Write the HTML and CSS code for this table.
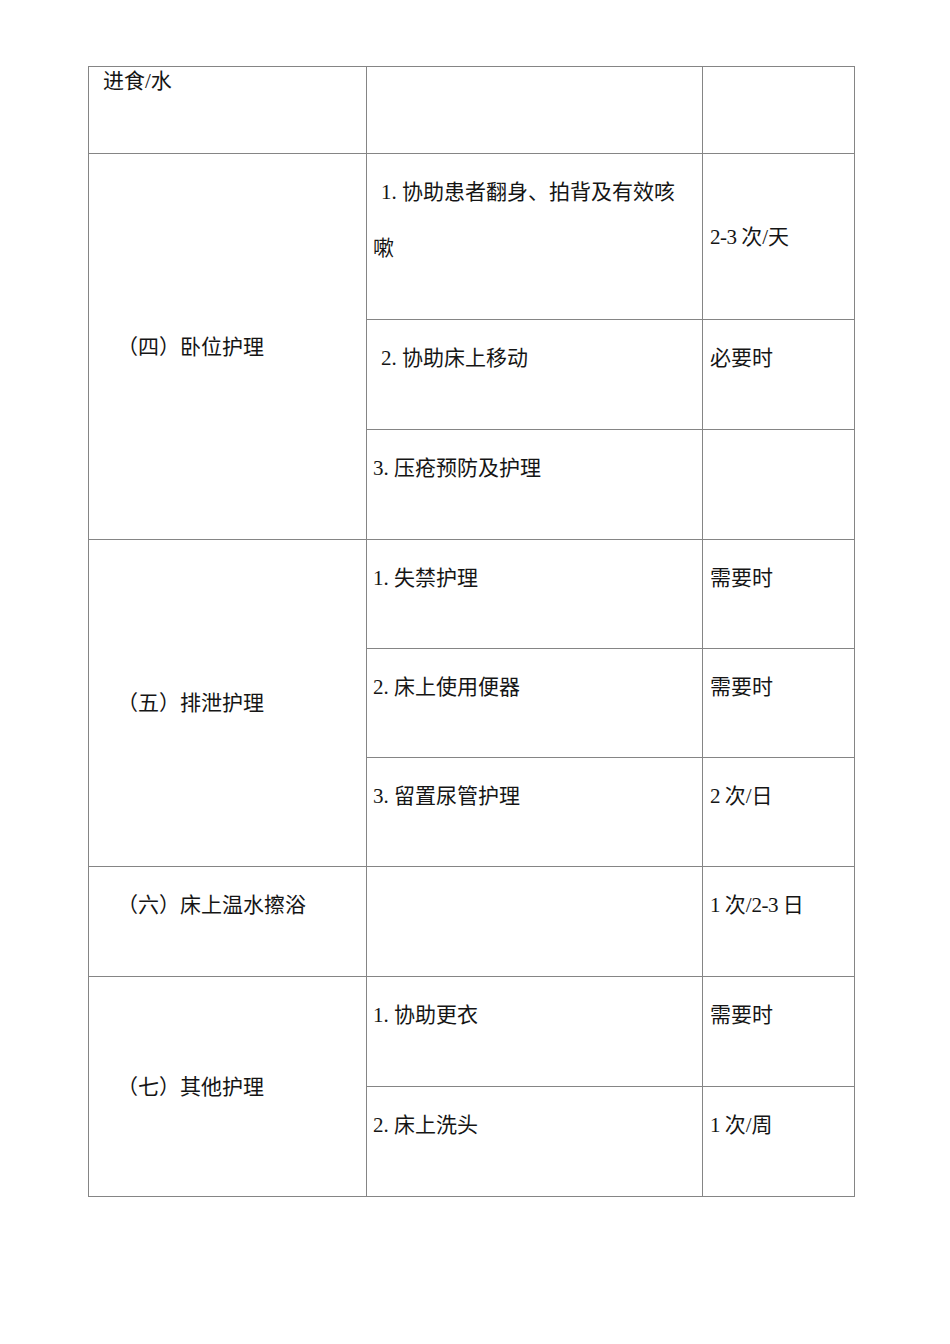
FILE: index.html
```html
<!DOCTYPE html>
<html lang="zh">
<head>
<meta charset="utf-8">
<link rel="stylesheet" href="styles.css">
</head>
<body>
<div class="page">
<table class="care">
<colgroup><col class="c1"><col class="c2"><col class="c3"></colgroup>
<tr class="h87">
  <td class="top0 first0">进食/水</td>
  <td></td>
  <td></td>
</tr>
<tr class="h166">
  <td rowspan="3" class="mid name">（四）卧位护理</td>
  <td class="top item ind">1. 协助患者翻身、拍背及有效咳嗽</td>
  <td class="mid freq"><span class="num">2-3 </span>次/天</td>
</tr>
<tr class="h110">
  <td class="top item ind">2. 协助床上移动</td>
  <td class="top freq">必要时</td>
</tr>
<tr class="h110">
  <td class="top item">3. 压疮预防及护理</td>
  <td></td>
</tr>
<tr class="h109">
  <td rowspan="3" class="mid name">（五）排泄护理</td>
  <td class="top item">1. 失禁护理</td>
  <td class="top freq">需要时</td>
</tr>
<tr class="h109">
  <td class="top item">2. 床上使用便器</td>
  <td class="top freq">需要时</td>
</tr>
<tr class="h109">
  <td class="top item">3. 留置尿管护理</td>
  <td class="top freq"><span class="num">2 </span>次/日</td>
</tr>
<tr class="h110">
  <td class="top name">（六）床上温水擦浴</td>
  <td></td>
  <td class="top freq"><span class="num">1 </span>次/<span class="num">2-3 </span>日</td>
</tr>
<tr class="h110">
  <td rowspan="2" class="mid name">（七）其他护理</td>
  <td class="top item">1. 协助更衣</td>
  <td class="top freq">需要时</td>
</tr>
<tr class="h110">
  <td class="top item">2. 床上洗头</td>
  <td class="top freq"><span class="num">1 </span>次/周</td>
</tr>
</table>
</div>
</body>
</html>
```

FILE: styles.css
```css
html, body {
  margin: 0;
  padding: 0;
  background: #ffffff;
}
.page {
  padding: 66px 0 0 88px;
}
.care {
  border-collapse: collapse;
  table-layout: fixed;
  width: 766px;
  font-family: "Liberation Serif", "Noto Sans CJK SC", serif;
  font-size: 21px;
  color: #151515;
}
.c1 { width: 278px; }
.c2 { width: 336px; }
.c3 { width: 152px; }
.care td {
  border: 1px solid #858585;
  padding: 0;
  line-height: 28px;
}
.h87 { height: 87px; }
.h166 { height: 166px; }
.h110 { height: 110px; }
.h109 { height: 109px; }
.care td.top {
  vertical-align: top;
  line-height: 56px;
  padding-top: 10px;
}
.care td.top0 {
  vertical-align: top;
  padding-top: 0;
}
.care td.mid {
  vertical-align: middle;
}
.care td.name { padding-left: 28px; }
.care td.item { padding-left: 6px; padding-right: 20px; }
.care td.ind { text-indent: 8px; }
.care td.freq { padding-left: 7px; }
.care td.first0 { padding-left: 14px; }
.num { letter-spacing: -0.5px; }
```
